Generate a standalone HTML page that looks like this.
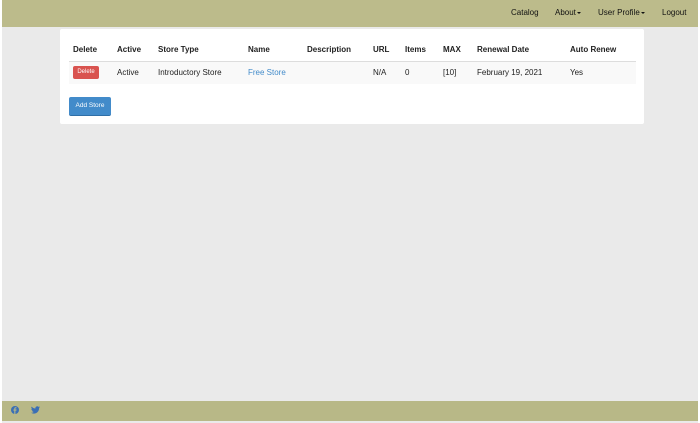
<!DOCTYPE html>
<html><head><style>
body{margin:0;width:700px;height:423px;background:#fff;font-family:"Liberation Sans",Arial,sans-serif;font-size:8px;color:#222;position:relative;overflow:hidden}
.main{position:absolute;left:2px;top:0;width:696px;height:423px;background:#eaeaea}
.nav{position:absolute;left:2px;top:0;width:696px;height:27px;background:#bcbb8b}
.nav span{position:absolute;top:8px;font-size:8px;color:#111}
.caret{display:inline-block;border-left:2px solid transparent;border-right:2px solid transparent;border-top:2px solid #111;vertical-align:middle;margin-left:1px}
.card{position:absolute;left:60px;top:29px;width:584px;height:95px;background:#fff;border-radius:2px}
.t{position:absolute;white-space:nowrap}
.h{font-weight:bold;top:45px}
.r{top:68px}
.row{position:absolute;left:69px;top:61px;width:567px;height:22px;background:#f9f9f9;border-top:1px solid #ddd}
.del{position:absolute;left:73px;top:66px;width:26px;height:13px;background:#d9534f;border-radius:2px;color:#fff;font-size:6px;text-align:center;line-height:13px}
.add{position:absolute;left:69px;top:97px;width:42px;height:18px;background:#428bca;border-radius:2px;color:#fff;font-size:6.5px;text-align:center;line-height:18px;border-bottom:1px solid #2f6fa7}
.foot{position:absolute;left:2px;top:401px;width:696px;height:20px;background:#b8b887}
</style></head><body>
<div class="main"></div>
<div class="nav">
<span style="left:509px">Catalog</span>
<span style="left:553px">About<i class="caret"></i></span>
<span style="left:596px">User Profile<i class="caret"></i></span>
<span style="left:660px">Logout</span>
</div>
<div class="card"></div>
<div class="t h" style="left:73px">Delete</div>
<div class="t h" style="left:117px">Active</div>
<div class="t h" style="left:158px">Store Type</div>
<div class="t h" style="left:248px">Name</div>
<div class="t h" style="left:307px">Description</div>
<div class="t h" style="left:373px">URL</div>
<div class="t h" style="left:405px">Items</div>
<div class="t h" style="left:443px">MAX</div>
<div class="t h" style="left:477px">Renewal Date</div>
<div class="t h" style="left:570px">Auto Renew</div>
<div class="row"></div>
<div class="del">Delete</div>
<div class="t r" style="left:117px">Active</div>
<div class="t r" style="left:158px">Introductory Store</div>
<div class="t r" style="left:248px;color:#428bca">Free Store</div>
<div class="t r" style="left:373px">N/A</div>
<div class="t r" style="left:405px">0</div>
<div class="t r" style="left:443px">[10]</div>
<div class="t r" style="left:477px">February 19, 2021</div>
<div class="t r" style="left:570px">Yes</div>
<div class="add">Add Store</div>
<div class="foot">
<svg style="position:absolute;left:9px;top:5px" width="8" height="8" viewBox="0 0 8 8"><circle cx="4" cy="4" r="4" fill="#3b6fb5"/><path d="M4.4 8V4.6h1l.2-1.1H4.4v-.7c0-.3.1-.5.5-.5h.6v-1H4.7c-.9 0-1.4.5-1.4 1.4v.8h-.9v1.1h.9V8z" fill="#b8b887"/></svg>
<svg style="position:absolute;left:29px;top:5px" width="9" height="8" viewBox="0 0 24 20"><path d="M24 2.4a10 10 0 0 1-2.8.8A5 5 0 0 0 23.3.4a10 10 0 0 1-3.1 1.2A4.9 4.9 0 0 0 11.8 6 14 14 0 0 1 1.7.9a4.9 4.9 0 0 0 1.5 6.6A4.9 4.9 0 0 1 1 6.9a4.9 4.9 0 0 0 3.9 4.8 5 5 0 0 1-2.2.1 4.9 4.9 0 0 0 4.6 3.4A9.9 9.9 0 0 1 0 17.3 14 14 0 0 0 7.5 19.5c9.1 0 14-7.5 14-14v-.6A10 10 0 0 0 24 2.4z" fill="#3b6fb5"/></svg>
</div>
</body></html>
